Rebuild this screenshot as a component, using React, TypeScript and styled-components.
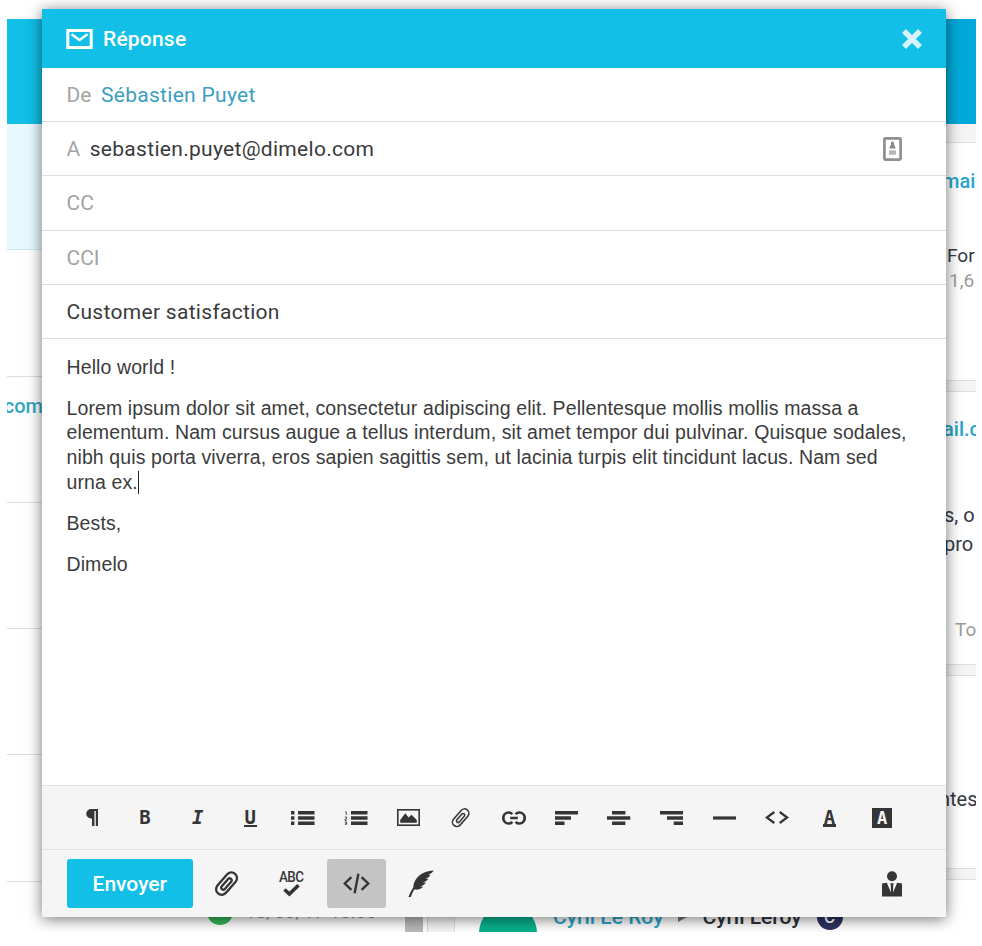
import React from "react";
import styled, { createGlobalStyle } from "styled-components";

const GlobalStyle = createGlobalStyle`
  *, *::before, *::after { box-sizing: border-box; }
  html, body { margin: 0; background: #fff; }
  body { font-family: Roboto, "Liberation Sans", sans-serif; font-size: 20px; color: #3a3a3c; }
`;

/* ---------- page behind the dialog ---------- */

const Stage = styled.div`
  position: relative;
  width: 969px;
  height: 932px;
  margin-left: 7px;
  overflow: hidden;
  display: flex;
  background: #fff;
`;

const Inbox = styled.div`
  flex: none;
  width: 398px;
  padding-top: 19px;
`;

const InboxBar = styled.div`
  height: 105px;
  background: #12bfe7;
`;

const Thread = styled.div<{ $selected?: boolean }>`
  height: 126.3px;
  padding-top: 17px;
  border-bottom: 1px solid ${(p) => (p.$selected ? "#cfe6ee" : "#dcdcdc")};
  background: ${(p) => (p.$selected ? "#e7f8fe" : "#fff")};
`;

const ThreadSender = styled.div`
  width: 36px;
  height: 24px;
  display: flex;
  justify-content: flex-end;
  font-weight: 500;
  line-height: 24px;
  color: #33a5c4;
`;

const ThreadMeta = styled.div`
  display: flex;
  align-items: center;
  gap: 12px;
  padding: 17px 0 0 200px;
  font-size: 19px;
  line-height: 26px;
  color: #8d8d8d;
`;

const StatusDot = styled.span`
  width: 26px;
  height: 26px;
  border-radius: 50%;
  background: #35b558;
`;

const ScrollTrack = styled.div`
  flex: none;
  width: 23px;
  margin-top: 124px;
  border-right: 1px solid #d8d8d8;
`;

const ScrollThumb = styled.div`
  width: 18px;
  height: 100%;
  background: #b9b9b9;
`;

const Conversation = styled.div`
  flex: 1;
  min-width: 0;
  margin-top: 19px;
  display: flex;
  flex-direction: column;
  background: #f4f4f4;
`;

const ConversationBar = styled.div`
  height: 105px;
  margin-bottom: 18px;
  flex: none;
  background: #00a9d9;
`;

const Card = styled.div<{ $height: number }>`
  flex: none;
  height: ${(p) => p.$height}px;
  margin: 0 0 10px 26px;
  border: solid #dedede;
  border-width: 1px 0 1px 1px;
  background: #fff;
`;

const Snippet = styled.div<{ $top: number; $indent: number; $tone?: "link" | "muted" | "ink"; $size?: number }>`
  padding: ${(p) => p.$top}px 0 0 ${(p) => p.$indent}px;
  line-height: 24px;
  white-space: nowrap;
  font-size: ${(p) => p.$size ?? 20}px;
  font-weight: ${(p) => (p.$tone === "link" ? 500 : 400)};
  color: ${(p) => (p.$tone === "link" ? "#2aa4c9" : p.$tone === "muted" ? "#9b9b9b" : "#35383f")};
`;

const AuthorRow = styled.div`
  display: flex;
  align-items: flex-start;
  padding: 24px 0 0 24px;
`;

const AuthorAvatar = styled.span`
  flex: none;
  width: 58px;
  height: 58px;
  border-radius: 50%;
  background: #07b08d;
`;

const AuthorName = styled.span<{ $link?: boolean }>`
  font-size: 21px;
  font-weight: 500;
  line-height: 26px;
  white-space: nowrap;
  color: ${(p) => (p.$link ? "#2aa4c9" : "#2d2f38")};
`;

const AuthorNames = styled.div`
  display: flex;
  align-items: center;
  gap: 15px;
  padding-left: 16px;
`;

const Initial = styled.span`
  flex: none;
  width: 26px;
  height: 26px;
  border-radius: 50%;
  background: #2d3261;
  color: #fff;
  font-size: 17px;
  font-weight: 500;
  line-height: 26px;
  text-align: center;
`;

/* ---------- dialog ---------- */

const Dialog = styled.section`
  position: absolute;
  left: 35px;
  top: 9px;
  width: 904px;
  height: 908px;
  display: flex;
  flex-direction: column;
  background: #fff;
  box-shadow: 0 2px 14px rgba(0, 0, 0, 0.55);
`;

const DialogHeader = styled.header`
  height: 59px;
  flex: none;
  display: flex;
  align-items: center;
  padding: 1px 24px 0;
  background: #12bfe7;
  color: #fff;
`;

const DialogTitle = styled.h1`
  flex: 1;
  margin: 0 0 0 10px;
  font-size: 21px;
  font-weight: 500;
  line-height: 30px;
  letter-spacing: 0.2px;
`;

const Field = styled.div`
  height: 54.2px;
  flex: none;
  display: flex;
  align-items: center;
  gap: 9.5px;
  padding: 1px 44px 0 24.5px;
  border-bottom: 1px solid #dedede;
  font-size: 21px;
`;

const FieldLabel = styled.span`
  color: #a3a3a3;
`;

const FieldValue = styled.span<{ $link?: boolean }>`
  flex: 1;
  color: ${(p) => (p.$link ? "#3b9fc2" : "#3a3a3c")};
  letter-spacing: 0.3px;
`;

const Editor = styled.div`
  flex: 1;
  padding: 15.6px 25px 0 24.5px;
  font-family: "Liberation Sans", Arial, sans-serif;
  font-size: 19.5px;
  line-height: 24.7px;
  letter-spacing: 0.105px;
  color: #3b3b3d;
`;

const Paragraph = styled.p`
  margin: 0 0 16.4px;
  white-space: nowrap;
`;

const Caret = styled.span`
  display: inline-block;
  width: 1.5px;
  height: 23px;
  margin-bottom: -5px;
  background: #222;
`;

const FormatBar = styled.div`
  height: 65px;
  flex: none;
  display: grid;
  grid-template-columns: repeat(16, 52.67px);
  padding-left: 24px;
  border-top: 1px solid #e2e2e2;
  border-bottom: 1px solid #e2e2e2;
  background: #f5f5f5;
`;

const ToolButton = styled.button`
  display: flex;
  align-items: center;
  justify-content: center;
  padding: 0;
  border: 0;
  background: none;
  color: #353537;
`;

const Glyph = styled.span<{ $italic?: boolean; $under?: number }>`
  width: 13px;
  height: 18px;
  border-bottom: ${(p) => p.$under ?? 0}px solid currentColor;
  font: ${(p) => (p.$italic ? "italic " : "")}bold 19px/16px "DejaVu Sans Mono", monospace;
  text-align: center;
`;

const InverseGlyph = styled.span`
  width: 20px;
  height: 20px;
  background: #353537;
  color: #f5f5f5;
  font: bold 17px/20px "DejaVu Sans Mono", monospace;
  text-align: center;
`;

const ActionBar = styled.footer`
  height: 67px;
  flex: none;
  display: flex;
  align-items: center;
  gap: 5.5px;
  padding: 0 24.5px;
  background: #f5f5f5;
`;

const SendButton = styled.button`
  width: 126.5px;
  height: 49px;
  margin-right: -1px;
  padding: 1px 0 0;
  border: 0;
  border-radius: 3px;
  background: #12bfe7;
  color: #fff;
  font: 500 21px Roboto, sans-serif;
`;

const ActionButton = styled(ToolButton)<{ $active?: boolean; $end?: boolean }>`
  width: 59px;
  height: 49px;
  flex-direction: column;
  border-radius: 3px;
  background: ${(p) => (p.$active ? "#c4c4c4" : "none")};
  ${(p) => (p.$end ? "margin-left: auto;" : "")}
`;

const SpellLabel = styled.span`
  height: 13px;
  font: 500 15.5px/12px Roboto, sans-serif;
  letter-spacing: -0.6px;
  transform: scaleX(0.86);
`;

/* ---------- icons ---------- */

const MailIcon = () => (
  <svg width="27" height="20" viewBox="0 0 27 20" fill="none" stroke="currentColor" strokeWidth="3">
    <path d="M1.8 1.5H25.2V18.5H1.8Z" />
    <path d="M5.5 5.3L13.5 11L21.5 5.3" strokeWidth="2.4" />
  </svg>
);

const CloseIcon = () => (
  <svg width="20" height="20" viewBox="0 0 20 20" fill="none" stroke="#d5f4fc" strokeWidth="5.4">
    <path d="M2 2L18 18M18 2L2 18" />
  </svg>
);

const ContactIcon = () => (
  <svg width="19" height="24" viewBox="0 0 19 24" fill="#8a8a8a">
    <rect x="1.4" y="1.4" width="16.2" height="21.2" rx="1" fill="none" stroke="#8f8f8f" strokeWidth="2.7" />
    <path d="M9.5 4.5C11 4.5 11.3 6 11 7.2L12.8 11.6H6.2L8 7.2C7.7 6 8 4.5 9.5 4.5Z" />
    <path d="M6 13.3H13V17.8H6Z" opacity=".6" />
  </svg>
);

const PilcrowIcon = () => (
  <svg width="12" height="17" viewBox="0 0 12 17" fill="currentColor">
    <path d="M5 0H12V17H9.8V2H8.4V17H6V9.5H5A4.8 4.75 0 0 1 5 0Z" />
  </svg>
);

const BulletListIcon = () => (
  <svg width="24" height="14" viewBox="0 0 24 14" fill="currentColor">
    <path d="M0 0H3.4V3.4H0ZM0 5.3H3.4V8.7H0ZM0 10.6H3.4V14H0ZM7 0H23.5V3.4H7ZM7 5.3H23.5V8.7H7ZM7 10.6H23.5V14H7Z" />
  </svg>
);

const NumberListIcon = () => (
  <svg width="24" height="14" viewBox="0 0 24 14" fill="currentColor">
    <path d="M7 0H23.5V3.4H7ZM7 5.3H23.5V8.7H7ZM7 10.6H23.5V14H7Z" />
    <path d="M1 1H2.3V4M.8 6H2.6V8H1V9.5H2.8M.8 11H2.6V13.4H.8M1 12.2H2.6" fill="none" stroke="currentColor" strokeWidth=".8" />
  </svg>
);

const ImageIcon = () => (
  <svg width="23" height="17" viewBox="0 0 23 17" fill="currentColor">
    <rect x=".8" y=".8" width="21.4" height="15.4" fill="none" stroke="currentColor" strokeWidth="1.6" />
    <path d="M3.2 13.8V11L8.3 4.2L11.6 8.6L14.5 5.8L19.8 11V13.8Z" />
  </svg>
);

/* One continuous wire, coiled inward and tilted to the right. */
const ClipIcon = ({ size, stroke }: { size: number; stroke: number }) => (
  <svg width={size} height={size} viewBox="0 0 28 28" fill="none" stroke="currentColor" strokeWidth={stroke} strokeLinecap="round">
    <g transform="rotate(41 14 14)">
      <path d="M19.6 17.5V6.6A5.6 5.6 0 0 0 8.4 6.6V21.4A5.6 5.6 0 0 0 19.6 21.4" transform="translate(-.6 0)" />
      <path d="M19 17.5V21.4M15.6 9.5V19.2A2 2 0 0 1 11.6 19.2V9.5A2 2 0 0 1 15.6 9.5" />
    </g>
  </svg>
);

const LinkIcon = () => (
  <svg width="24" height="14" viewBox="0 0 24 14" fill="none" stroke="currentColor" strokeWidth="2.7">
    <path d="M10.3 3.2C9.3 2 8.2 1.5 6.6 1.5A5.3 5.5 0 0 0 6.6 12.5C8.2 12.5 9.3 12 10.3 10.8M13.7 3.2C14.7 2 15.8 1.5 17.4 1.5A5.3 5.5 0 0 1 17.4 12.5C15.8 12.5 14.7 12 13.7 10.8M8.2 7H15.8" />
  </svg>
);

const bars = {
  left: "M0 0H23.3V3.4H0ZM0 5.3H16V8.7H0ZM0 10.6H9.5V14H0Z",
  center: "M5 0H18.4V3.4H5ZM0 5.3H23.3V8.7H0ZM5 10.6H18.4V14H5Z",
  right: "M0 0H23.3V3.4H0ZM7 5.3H23.3V8.7H7ZM13.7 10.6H23.3V14H13.7Z",
  rule: "M0 5.4H23.3V8.6H0Z",
};

const BarsIcon = ({ kind }: { kind: keyof typeof bars }) => (
  <svg width="23.3" height="14" viewBox="0 0 23.3 14" fill="currentColor">
    <path d={bars[kind]} />
  </svg>
);

const AnglesIcon = () => (
  <svg width="24" height="13" viewBox="0 0 24 13" fill="none" stroke="currentColor" strokeWidth="2.3">
    <path d="M9.3 1L1.8 6.5L9.3 12M14.7 1L22.2 6.5L14.7 12" />
  </svg>
);

const CheckIcon = () => (
  <svg width="17" height="13" viewBox="0 0 17 13" fill="none" stroke="currentColor" strokeWidth="3.6">
    <path d="M1.5 5.5L6.4 10L15.5 1.2" />
  </svg>
);

const SourceIcon = () => (
  <svg width="27" height="21" viewBox="0 0 27 21" fill="none" stroke="currentColor" strokeWidth="2.4">
    <path d="M8.4 4.2L1.8 10.5L8.4 16.8M18.6 4.2L25.2 10.5L18.6 16.8M15.4 .8L11.6 20.2" />
  </svg>
);

const FeatherIcon = () => (
  <svg width="26" height="28" viewBox="0 0 26 28" fill="currentColor">
    <path d="M25.8 .6C18 .8 11.5 4.2 7.8 9.5C5.7 12.6 5.4 15 5.3 17.2C3.3 20.4 1.7 23.6 .4 27H2.8C3.6 24.4 4.8 21.8 6.2 19.5C9.6 20 13 19.2 15.2 16.7L11.9 16.4C14.5 15.8 16.6 14.6 18 12.7L14.8 12.6C17.2 11.8 19.2 10.7 20.4 8.8L17.6 8.8C19.8 7.9 21.6 6.7 22.4 5L20.4 5C22.6 3.8 24.8 2.6 25.8 .6Z" />
  </svg>
);

const AgentIcon = () => (
  <svg width="20" height="26" viewBox="0 0 20 26" fill="currentColor">
    <circle cx="10" cy="5.2" r="5" />
    <path d="M0 12.5L4.8 11.8L9 21.5L8.8 14.2L8.2 12.3H11.8L11.2 14.2L11 21.5L15.2 11.8L20 12.5V25.4H0Z" />
  </svg>
);

const tools: { name: string; icon: React.ReactNode }[] = [
  { name: "Paragraphe", icon: <PilcrowIcon /> },
  { name: "Gras", icon: <Glyph>B</Glyph> },
  { name: "Italique", icon: <Glyph $italic>I</Glyph> },
  { name: "Souligné", icon: <Glyph $under={2}>U</Glyph> },
  { name: "Liste à puces", icon: <BulletListIcon /> },
  { name: "Liste numérotée", icon: <NumberListIcon /> },
  { name: "Image", icon: <ImageIcon /> },
  { name: "Fichier", icon: <ClipIcon size={22} stroke={2} /> },
  { name: "Lien", icon: <LinkIcon /> },
  { name: "Aligner à gauche", icon: <BarsIcon kind="left" /> },
  { name: "Centrer", icon: <BarsIcon kind="center" /> },
  { name: "Aligner à droite", icon: <BarsIcon kind="right" /> },
  { name: "Séparateur", icon: <BarsIcon kind="rule" /> },
  { name: "Code", icon: <AnglesIcon /> },
  { name: "Couleur du texte", icon: <Glyph $under={3}>A</Glyph> },
  { name: "Couleur de fond", icon: <InverseGlyph>A</InverseGlyph> },
];

export default function App() {
  return (
    <>
      <GlobalStyle />
      <Stage>
        <Inbox>
          <InboxBar />
          <Thread $selected />
          <Thread />
          <Thread>
            <ThreadSender>com</ThreadSender>
          </Thread>
          <Thread />
          <Thread />
          <Thread />
          <ThreadMeta>
            <StatusDot />
            13/03/17 13:00
          </ThreadMeta>
        </Inbox>
        <ScrollTrack>
          <ScrollThumb />
        </ScrollTrack>
        <Conversation>
          <ConversationBar />
          <Card $height={239}>
            <Snippet $top={26} $indent={487} $tone="link">mai</Snippet>
            <Snippet $top={51} $indent={492} $size={19}>For</Snippet>
            <Snippet $top={1} $indent={494} $size={19} $tone="muted">1,6</Snippet>
          </Card>
          <Card $height={274}>
            <Snippet $top={25} $indent={488} $tone="link">ail.c</Snippet>
            <Snippet $top={62} $indent={489}>s, o</Snippet>
            <Snippet $top={5} $indent={489}>pro</Snippet>
            <Snippet $top={62} $indent={500} $size={19} $tone="muted">To</Snippet>
          </Card>
          <Card $height={194}>
            <Snippet $top={111} $indent={484}>ntes</Snippet>
          </Card>
          <Card $height={90}>
            <AuthorRow>
              <AuthorAvatar />
              <AuthorNames>
                <AuthorName $link>Cyril Le Roy</AuthorName>
                <svg width="9" height="10" viewBox="0 0 9 10" fill="#777">
                  <path d="M0 0L9 5L0 10Z" />
                </svg>
                <AuthorName>Cyril Leroy</AuthorName>
                <Initial>C</Initial>
              </AuthorNames>
            </AuthorRow>
          </Card>
        </Conversation>

        <Dialog>
          <DialogHeader>
            <MailIcon />
            <DialogTitle>Réponse</DialogTitle>
            <CloseIcon />
          </DialogHeader>
          <Field>
            <FieldLabel>De</FieldLabel>
            <FieldValue $link>Sébastien Puyet</FieldValue>
          </Field>
          <Field>
            <FieldLabel>A</FieldLabel>
            <FieldValue>sebastien.puyet@dimelo.com</FieldValue>
            <ContactIcon />
          </Field>
          <Field>
            <FieldLabel>CC</FieldLabel>
          </Field>
          <Field>
            <FieldLabel>CCI</FieldLabel>
          </Field>
          <Field>
            <FieldValue>Customer satisfaction</FieldValue>
          </Field>
          <Editor>
            <Paragraph>Hello world !</Paragraph>
            <Paragraph>
              Lorem ipsum dolor sit amet, consectetur adipiscing elit. Pellentesque mollis mollis massa a
              <br />
              elementum. Nam cursus augue a tellus interdum, sit amet tempor dui pulvinar. Quisque sodales,
              <br />
              nibh quis porta viverra, eros sapien sagittis sem, ut lacinia turpis elit tincidunt lacus. Nam sed
              <br />
              urna ex.
              <Caret />
            </Paragraph>
            <Paragraph>Bests,</Paragraph>
            <Paragraph>Dimelo</Paragraph>
          </Editor>
          <FormatBar>
            {tools.map((tool) => (
              <ToolButton key={tool.name} aria-label={tool.name}>
                {tool.icon}
              </ToolButton>
            ))}
          </FormatBar>
          <ActionBar>
            <SendButton>Envoyer</SendButton>
            <ActionButton aria-label="Pièce jointe">
              <ClipIcon size={28} stroke={2.3} />
            </ActionButton>
            <ActionButton aria-label="Orthographe">
              <SpellLabel>ABC</SpellLabel>
              <CheckIcon />
            </ActionButton>
            <ActionButton aria-label="Source" $active>
              <SourceIcon />
            </ActionButton>
            <ActionButton aria-label="Signature">
              <FeatherIcon />
            </ActionButton>
            <ActionButton aria-label="Agent" $end>
              <AgentIcon />
            </ActionButton>
          </ActionBar>
        </Dialog>
      </Stage>
    </>
  );
}
